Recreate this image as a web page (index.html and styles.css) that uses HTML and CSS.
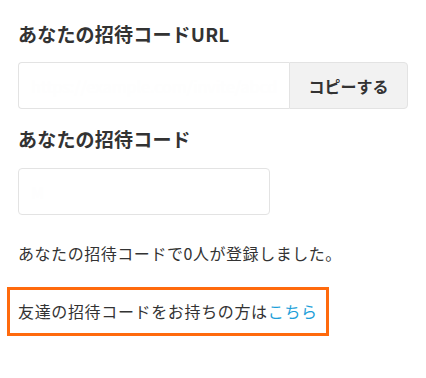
FILE: index.html
```html
<!DOCTYPE html>
<html lang="ja">
<head>
<meta charset="utf-8">
<title>招待コード</title>
<link rel="stylesheet" href="styles.css">
</head>
<body>
<div class="wrap">
  <h2 class="title">あなたの招待コードURL</h2>
  <div class="url-row">
    <input class="field field-url" type="text" value="https://example.com/invite/abcd1234" readonly>
    <button class="copy-btn" type="button">コピーする</button>
  </div>
  <h2 class="title title-code">あなたの招待コード</h2>
  <input class="field field-code" type="text" value="M" readonly>
  <p class="count">あなたの招待コードで0人が登録しました。</p>
  <div class="friend-box">友達の招待コードをお持ちの方は<a class="link" href="#">こちら</a></div>
</div>
</body>
</html>
```

FILE: styles.css
```css
* { box-sizing: border-box; }
html, body {
  margin: 0;
  padding: 0;
  background: #fff;
}
body {
  font-family: "Noto Sans CJK JP", "Noto Sans", sans-serif;
  color: #333;
}
.wrap {
  padding: 20px 18px 0 18px;
}
.title {
  margin: 0;
  font-size: 19px;
  line-height: 28px;
  font-weight: 700;
  letter-spacing: 0.2px;
  color: #333;
}
.url-row {
  display: flex;
  margin-top: 14px;
  height: 47px;
}
.field {
  height: 47px;
  border: 1px solid #e3e3e3;
  border-radius: 4px;
  background: #fff;
  font-family: "Noto Sans CJK JP", "Noto Sans", sans-serif;
  font-size: 16px;
  color: #fefefe;
  -webkit-text-fill-color: #fefefe;
  padding: 0 12px;
  outline: none;
}
.field-url {
  flex: 0 0 271px;
  width: 271px;
  border-radius: 4px 0 0 4px;
  border-right: none;
}
.copy-btn {
  flex: 1;
  height: 47px;
  border: 1px solid #e3e3e3;
  border-radius: 0 4px 4px 0;
  background: #f2f2f2;
  font-family: "Noto Sans CJK JP", "Noto Sans", sans-serif;
  font-size: 16px;
  font-weight: 700;
  color: #333;
  padding: 0;
}
.title-code {
  margin-top: 16px;
}
.field-code {
  display: block;
  width: 252px;
  margin-top: 15px;
}
.count {
  margin: 26px 0 0 0;
  font-size: 16px;
  line-height: 24px;
  letter-spacing: 0.55px;
}
.friend-box {
  margin: 22px 0 0 -11px;
  width: 322px;
  border: 3px solid #ff6a0d;
  padding: 9px 8px 10px 8px;
  font-size: 16px;
  line-height: 24px;
  letter-spacing: 0.65px;
  color: #333;
  white-space: nowrap;
}
.link {
  color: #1e9fd9;
  text-decoration: none;
}
```
